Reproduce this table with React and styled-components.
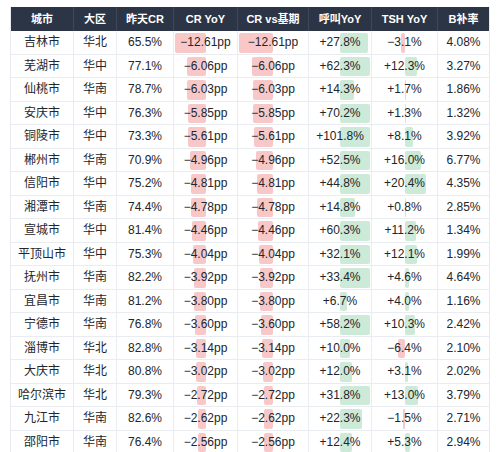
import React from "react";
import styled, { createGlobalStyle } from "styled-components";

const Global = createGlobalStyle`
  html, body { margin: 0; padding: 0; background: #ffffff; }
  body { font-family: "Liberation Sans", "Noto Sans CJK SC", sans-serif; }
`;

const Wrap = styled.div`
  padding: 7px 10px 0 10px;
`;

const Table = styled.table`
  width: 479px;
  border-collapse: collapse;
  table-layout: fixed;
  border-left: 1px solid #e6e9ef;
  border-right: 1px solid #e6e9ef;
`;

const Th = styled.th`
  height: 24px;
  padding: 0;
  line-height: 14px;
  background: #2c3546;
  color: #ffffff;
  font-size: 11px;
  font-weight: 700;
  text-align: center;
  border-right: 1px solid #3f4859;
  white-space: nowrap;
  &:last-child { border-right: none; }
`;

const Tr = styled.tr`
  border-bottom: 1px solid #e9ecf1;
`;

const Td = styled.td`
  position: relative;
  padding: 0;
  height: 22.5px;
  line-height: 16px;
  font-size: 12px;
  color: #22262c;
  text-align: center;
  white-space: nowrap;
  border-right: 1px solid #e9ecf1;
  &:last-child { border-right: none; }
`;

const Bar = styled.span`
  position: absolute;
  top: 2px;
  bottom: 1px;
  border-radius: 2px;
  background: ${(p) => (p.$neg ? "#f8c8c9" : "#cde9d7")};
  ${(p) => (p.$neg ? "right: 50%;" : "left: 50%;")}
`;

const Label = styled.span`
  position: relative;
`;

const cols = [63, 43, 57, 64, 71, 63, 66, 52];
const headers = ["城市", "大区", "昨天CR", "CR YoY", "CR vs基期", "呼叫YoY", "TSH YoY", "B补率"];

const rows = [
  ["吉林市", "华北", "65.5%", -12.61, 27.8, -3.1, "4.08%"],
  ["芜湖市", "华中", "77.1%", -6.06, 62.3, 12.3, "3.27%"],
  ["仙桃市", "华南", "78.7%", -6.03, 14.3, 1.7, "1.86%"],
  ["安庆市", "华中", "76.3%", -5.85, 70.2, 1.3, "1.32%"],
  ["铜陵市", "华中", "73.3%", -5.61, 101.8, 8.1, "3.92%"],
  ["郴州市", "华南", "70.9%", -4.96, 52.5, 16.0, "6.77%"],
  ["信阳市", "华中", "75.2%", -4.81, 44.8, 20.4, "4.35%"],
  ["湘潭市", "华南", "74.4%", -4.78, 14.8, 0.8, "2.85%"],
  ["宣城市", "华中", "81.4%", -4.46, 60.3, 11.2, "1.34%"],
  ["平顶山市", "华中", "75.3%", -4.04, 32.1, 12.1, "1.99%"],
  ["抚州市", "华南", "82.2%", -3.92, 33.4, 4.6, "4.64%"],
  ["宜昌市", "华南", "81.2%", -3.8, 6.7, 4.0, "1.16%"],
  ["宁德市", "华南", "76.8%", -3.6, 58.2, 10.3, "2.42%"],
  ["淄博市", "华北", "82.8%", -3.14, 10.0, -6.4, "2.10%"],
  ["大庆市", "华北", "80.8%", -3.02, 12.0, 3.1, "2.02%"],
  ["哈尔滨市", "华北", "79.3%", -2.72, 31.8, 13.0, "3.79%"],
  ["九江市", "华南", "82.6%", -2.62, 22.3, -1.5, "2.71%"],
  ["邵阳市", "华南", "76.4%", -2.56, 12.4, 5.3, "2.94%"],
];

const fmt = (v, digits, unit) =>
  (v < 0 ? "\u2212" : "+") + Math.abs(v).toFixed(digits) + unit;

function BarCell({ value, max, digits, unit, signed = true }) {
  const r = Math.min(Math.abs(value) / max, 1);
  const text = signed
    ? fmt(value, digits, unit)
    : (value < 0 ? "\u2212" : "") + Math.abs(value).toFixed(digits) + unit;
  return (
    <Td>
      <Bar $neg={value < 0} style={{ width: `calc(${r} * (50% - 1px))` }} />
      <Label>{text}</Label>
    </Td>
  );
}

export default function App() {
  return (
    <>
      <Global />
      <Wrap>
        <Table>
          <colgroup>
            {cols.map((w, i) => (
              <col key={i} style={{ width: w }} />
            ))}
          </colgroup>
          <thead>
            <tr>
              {headers.map((h) => (
                <Th key={h}>{h}</Th>
              ))}
            </tr>
          </thead>
          <tbody>
            {rows.map((r) => (
              <Tr key={r[0]}>
                <Td>{r[0]}</Td>
                <Td>{r[1]}</Td>
                <Td>{r[2]}</Td>
                <BarCell value={r[3]} max={10} digits={2} unit="pp" signed={false} />
                <BarCell value={r[3]} max={10} digits={2} unit="pp" signed={false} />
                <BarCell value={r[4]} max={30} digits={1} unit="%" />
                <BarCell value={r[5]} max={30} digits={1} unit="%" />
                <Td>{r[6]}</Td>
              </Tr>
            ))}
          </tbody>
        </Table>
      </Wrap>
    </>
  );
}
